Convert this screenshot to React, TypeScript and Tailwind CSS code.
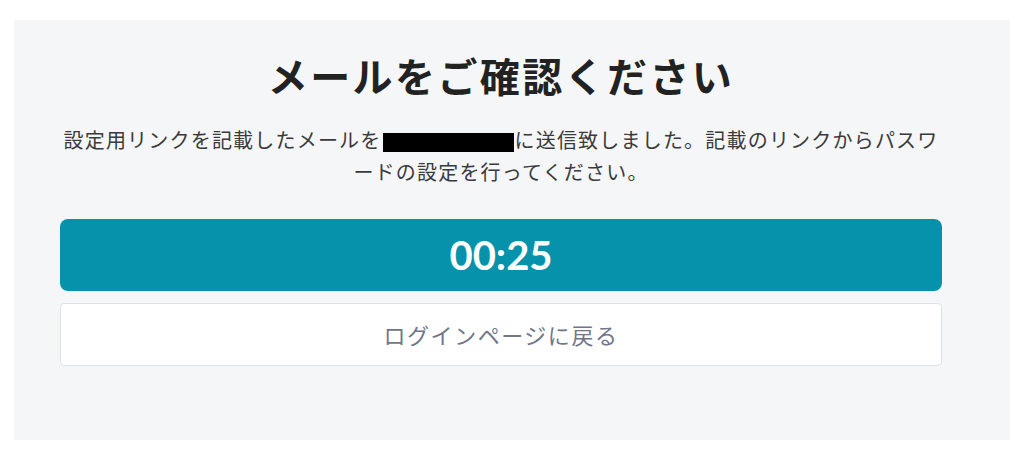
import React from "react";

const App = () => {
  return (
    <div className="w-[1024px] h-[463px] bg-white pt-[20px] pl-[14px] font-['Noto_Sans_CJK_JP','Noto_Sans',sans-serif]">
      <div className="w-[996px] h-[420px] bg-[#f5f6f8] pl-[46px] pr-[68px] pt-[25px]">
        <h1 className="text-center text-[40px] leading-[60px] font-bold tracking-[0.06em] text-[#222222]">
          メールをご確認ください
        </h1>
        <p className="mt-[19px] text-center text-[20px] leading-[32px] tracking-[0.06em] text-[#3a3a3a]">
          設定用リンクを記載したメールを
          <span className="inline-block align-middle w-[131px] h-[19px] bg-black mx-[1px]" />
          に送信致しました。記載のリンクからパスワ
          <br />
          ードの設定を行ってください。
        </p>
        <div className="mt-[31px] h-[72px] rounded-[8px] bg-[#0592aa] flex items-center justify-center">
          <span className="font-['Lato',sans-serif] font-bold text-[40px] text-white leading-none">
            00:25
          </span>
        </div>
        <button className="mt-[12px] w-full h-[63px] rounded-[4px] bg-white border border-[#dfe1e8] flex items-center justify-center text-[22px] text-[#70768a] tracking-[0.07em]">
          ログインページに戻る
        </button>
      </div>
    </div>
  );
};

export default App;
